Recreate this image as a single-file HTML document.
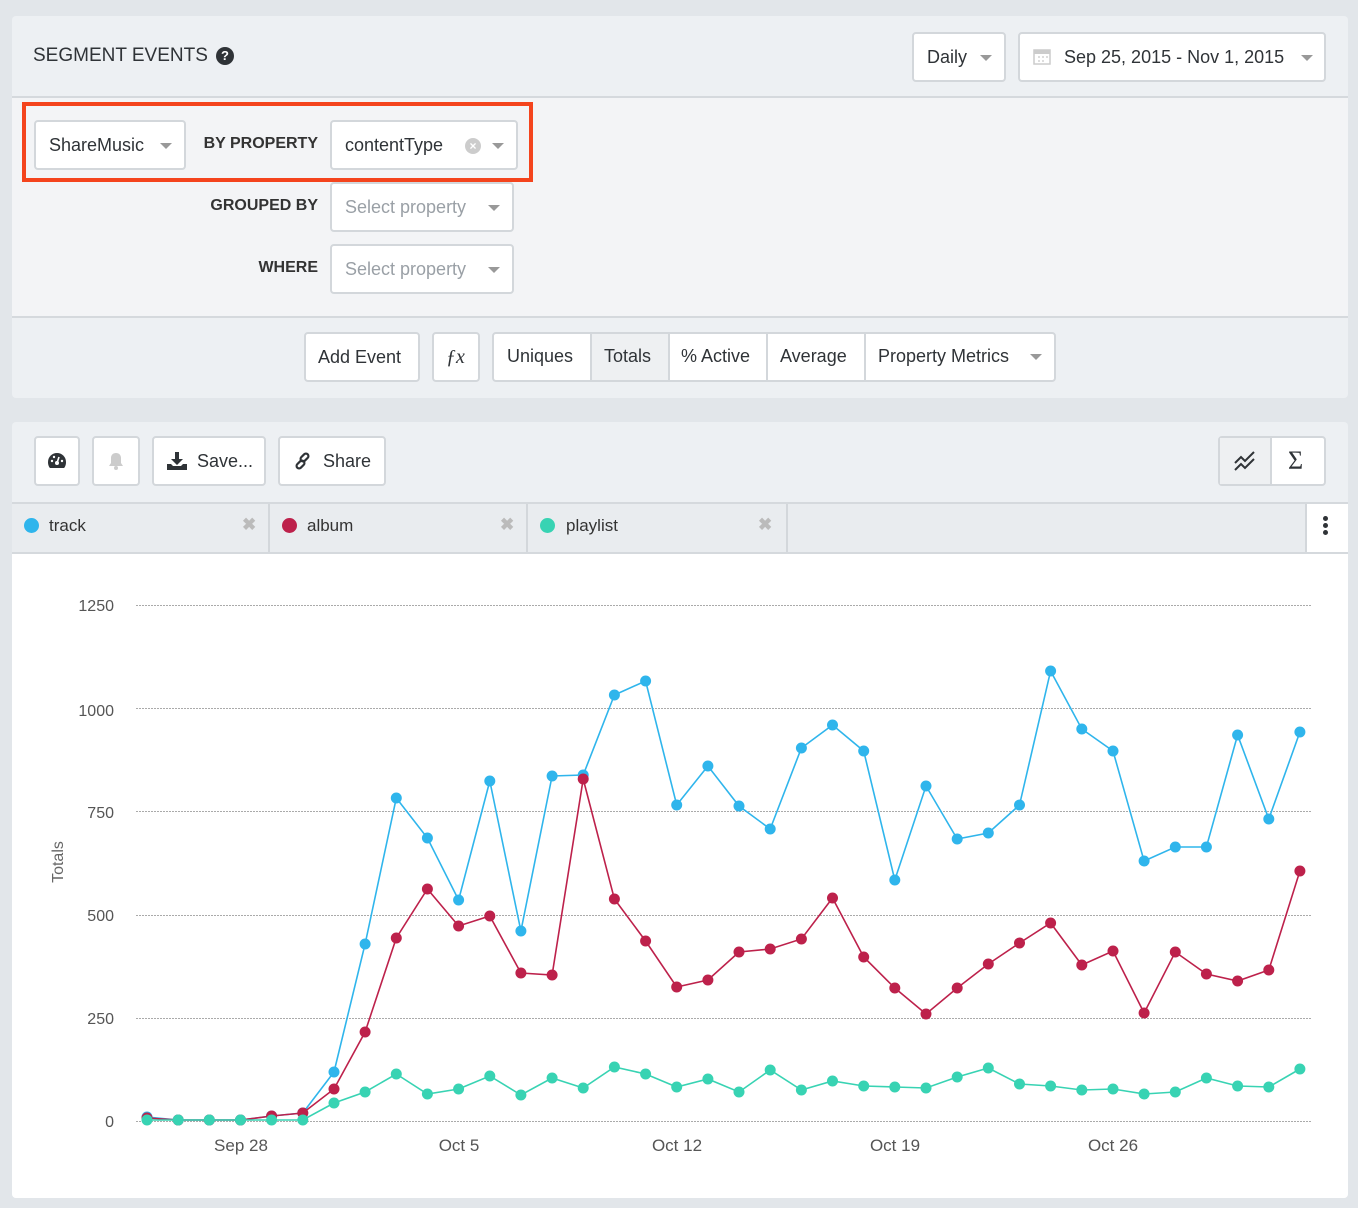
<!DOCTYPE html>
<html><head><meta charset="utf-8"><style>
*{box-sizing:border-box;margin:0;padding:0}
body{width:1358px;height:1208px;background:#e2e6ea;font-family:"Liberation Sans",sans-serif;color:#333;position:relative;overflow:hidden}
.a{position:absolute}
.panel{position:absolute;left:12px;width:1336px;background:#edf0f3;border-radius:4px}
.btn{position:absolute;background:#fff;border:2px solid #d3d7db;border-radius:4px;font-size:18px;color:#2f3337;display:flex;align-items:center;padding-left:13px;white-space:nowrap}
.car{display:inline-block;width:0;height:0;border-left:6px solid transparent;border-right:6px solid transparent;border-top:6px solid #999;position:absolute}
.lbl{position:absolute;font-size:16px;font-weight:bold;color:#333;text-align:right}
.ph{color:#9aa0a6}
</style></head><body>
<div class="panel" style="top:16px;height:382px;">
 <div class="a" style="left:0;top:80px;width:1336px;height:2px;background:#d5d9dd"></div>
 <div class="a" style="left:0;top:82px;width:1336px;height:218px;background:#f3f4f6"></div>
 <div class="a" style="left:0;top:300px;width:1336px;height:2px;background:#d5d9dd"></div>
</div>
<div class="a" style="left:33px;top:45px;font-size:19px;color:#2f3337">SEGMENT EVENTS</div>
<div class="a" style="left:216px;top:47px;width:18px;height:18px;border-radius:50%;background:#2f3337;color:#fff;font-size:13px;font-weight:bold;text-align:center;line-height:18px">?</div>
<div class="btn" style="left:912px;top:32px;width:94px;height:50px">Daily<span class="car" style="left:66px;top:21px"></span></div>
<div class="btn" style="left:1018px;top:32px;width:308px;height:50px;padding-left:44px">
 <svg class="a" style="left:13px;top:13px" width="18" height="18"><rect x="1" y="3" width="16" height="14" fill="none" stroke="#ccc" stroke-width="1.5"/><rect x="1" y="3" width="16" height="4" fill="#ccc"/><path d="M5 9h2v2H5zM9 9h2v2H9zM13 9h2v2h-2zM5 13h2v2H5zM9 13h2v2H9z" fill="#ddd"/></svg>
 Sep 25, 2015 - Nov 1, 2015<span class="car" style="left:281px;top:21px"></span></div>

<div class="a" style="left:22px;top:102px;width:511px;height:80px;border:4px solid #f4441d"></div>
<div class="btn" style="left:34px;top:120px;width:152px;height:50px">ShareMusic<span class="car" style="left:124px;top:21px"></span></div>
<div class="lbl" style="left:190px;top:135px;width:128px">BY PROPERTY</div>
<div class="btn" style="left:330px;top:120px;width:188px;height:50px">contentType
 <span class="a" style="left:133px;top:16px;width:16px;height:16px;border-radius:50%;background:#ccc;color:#fff;font-size:12px;line-height:16px;text-align:center;font-weight:bold">×</span>
 <span class="car" style="left:160px;top:21px"></span></div>
<div class="lbl" style="left:190px;top:197px;width:128px">GROUPED BY</div>
<div class="btn ph" style="left:330px;top:182px;width:184px;height:50px;color:#9aa0a6">Select property<span class="car" style="left:156px;top:21px"></span></div>
<div class="lbl" style="left:190px;top:259px;width:128px">WHERE</div>
<div class="btn ph" style="left:330px;top:244px;width:184px;height:50px;color:#9aa0a6">Select property<span class="car" style="left:156px;top:21px"></span></div>

<div class="btn" style="left:304px;top:332px;width:116px;height:50px;padding-left:12px">Add Event</div>
<div class="btn" style="left:432px;top:332px;width:48px;height:50px;padding-left:12px;font-family:'Liberation Serif',serif;font-style:italic;font-size:20px">ƒx</div>
<div class="a" style="left:492px;top:332px;width:564px;height:50px;border:2px solid #d3d7db;border-radius:4px;background:#fff"></div>
<div class="a" style="left:592px;top:334px;width:76px;height:46px;background:#eef0f2"></div>
<div class="a" style="left:590px;top:334px;width:2px;height:46px;background:#d3d7db"></div>
<div class="a" style="left:668px;top:334px;width:2px;height:46px;background:#d3d7db"></div>
<div class="a" style="left:766px;top:334px;width:2px;height:46px;background:#d3d7db"></div>
<div class="a" style="left:864px;top:334px;width:2px;height:46px;background:#d3d7db"></div>
<div class="a" style="left:507px;top:346px;font-size:18px;color:#2f3337">Uniques</div>
<div class="a" style="left:604px;top:346px;font-size:18px;color:#2f3337">Totals</div>
<div class="a" style="left:681px;top:346px;font-size:18px;color:#2f3337">% Active</div>
<div class="a" style="left:780px;top:346px;font-size:18px;color:#2f3337">Average</div>
<div class="a" style="left:878px;top:346px;font-size:18px;color:#2f3337">Property Metrics</div>
<span class="car" style="left:1030px;top:354px"></span>

<div class="panel" style="top:422px;height:776px;overflow:hidden">
 <div class="a" style="left:0;top:80px;width:1336px;height:2px;background:#d5d9dd"></div>
 <div class="a" style="left:0;top:82px;width:1336px;height:48px;background:#e9ecef"></div>
 <div class="a" style="left:0;top:130px;width:1336px;height:2px;background:#d5d9dd"></div>
 <div class="a" style="left:0;top:132px;width:1336px;height:644px;background:#fff"></div>
 <div class="a" style="left:256px;top:82px;width:2px;height:48px;background:#d3d7db"></div>
 <div class="a" style="left:514px;top:82px;width:2px;height:48px;background:#d3d7db"></div>
 <div class="a" style="left:774px;top:82px;width:2px;height:48px;background:#d3d7db"></div>
 <div class="a" style="left:1293px;top:82px;width:2px;height:48px;background:#d3d7db"></div>
 <div class="a" style="left:1295px;top:82px;width:41px;height:48px;background:#fff"></div>
</div>
<div class="btn" style="left:34px;top:436px;width:46px;height:50px;padding:0;justify-content:center">
 <svg width="20" height="18" viewBox="0 0 20 18"><path d="M10 1a9 9 0 0 0-9 9c0 3 1 5 2 6h14c1-1 2-3 2-6a9 9 0 0 0-9-9z" fill="#2f3337"/><circle cx="10" cy="11" r="2" fill="#fff"/><path d="M10 11L12 5" stroke="#fff" stroke-width="1.6"/><circle cx="5" cy="9" r="1.2" fill="#fff"/><circle cx="7" cy="5" r="1.2" fill="#fff"/><circle cx="15" cy="9" r="1.2" fill="#fff"/></svg></div>
<div class="btn" style="left:92px;top:436px;width:48px;height:50px;padding:0;justify-content:center">
 <svg width="18" height="20" viewBox="0 0 18 20"><path d="M9 2c-3 0-5 2-5 5v5l-2 3h14l-2-3V7c0-3-2-5-5-5z" fill="#ccc"/><circle cx="9" cy="17" r="2" fill="#ccc"/></svg></div>
<div class="btn" style="left:152px;top:436px;width:114px;height:50px">
 <svg width="20" height="18" viewBox="0 0 20 18" style="margin-right:10px"><path d="M8 0h4v7h4l-6 6-6-6h4z" fill="#2f3337"/><path d="M0 12h4l2 2h8l2-2h4v6H0z" fill="#2f3337"/></svg>Save...</div>
<div class="btn" style="left:278px;top:436px;width:108px;height:50px">
 <svg width="20" height="20" viewBox="0 0 20 20" style="margin-right:10px"><g fill="none" stroke="#2f3337" stroke-width="2.2"><rect x="9" y="2" width="5" height="9" rx="2.5" transform="rotate(45 11.5 6.5)"/><rect x="5" y="9" width="5" height="9" rx="2.5" transform="rotate(45 7.5 13.5)"/></g></svg>Share</div>
<div class="a" style="left:1218px;top:436px;width:108px;height:50px;border:2px solid #d3d7db;border-radius:4px;background:#fff"></div>
<div class="a" style="left:1220px;top:438px;width:50px;height:46px;background:#eef0f2"></div>
<div class="a" style="left:1270px;top:438px;width:2px;height:46px;background:#d3d7db"></div>
<svg class="a" style="left:1233px;top:450px" width="24" height="22" viewBox="0 0 24 22"><path d="M2 13l6-6 4 4 9-9M2 20l6-6 4 4 9-9" fill="none" stroke="#2f3337" stroke-width="2"/></svg>
<div class="a" style="left:1288px;top:446px;font-size:26px;color:#2f3337;font-family:'Liberation Serif',serif">Σ</div>

<div class="a" style="left:24px;top:518px;width:15px;height:15px;border-radius:50%;background:#2fb5ec"></div>
<div class="a" style="left:49px;top:516px;font-size:17px">track</div>
<div class="a" style="left:242px;top:515px;font-size:17px;color:#bbb;font-weight:bold">✖</div>
<div class="a" style="left:282px;top:518px;width:15px;height:15px;border-radius:50%;background:#bd214b"></div>
<div class="a" style="left:307px;top:516px;font-size:17px">album</div>
<div class="a" style="left:500px;top:515px;font-size:17px;color:#bbb;font-weight:bold">✖</div>
<div class="a" style="left:540px;top:518px;width:15px;height:15px;border-radius:50%;background:#38d3b3"></div>
<div class="a" style="left:566px;top:516px;font-size:17px">playlist</div>
<div class="a" style="left:758px;top:515px;font-size:17px;color:#bbb;font-weight:bold">✖</div>
<div class="a" style="left:1323px;top:516px;width:5px;height:5px;border-radius:50%;background:#2f3337;box-shadow:0 7px 0 #2f3337,0 14px 0 #2f3337"></div>

<svg class="a" style="left:0;top:0" width="1358" height="1208" id="ch">
<g stroke="#aaa" stroke-width="1" stroke-dasharray="2,1">
<line x1="136" x2="1311" y1="605.5" y2="605.5"/><line x1="136" x2="1311" y1="708.5" y2="708.5"/><line x1="136" x2="1311" y1="811.5" y2="811.5"/><line x1="136" x2="1311" y1="915.5" y2="915.5"/><line x1="136" x2="1311" y1="1018.5" y2="1018.5"/><line x1="136" x2="1311" y1="1121.5" y2="1121.5"/>
</g>
<g font-family="Liberation Sans,sans-serif" font-size="16" fill="#555" text-anchor="end">
<text x="114" y="611">1250</text><text x="114" y="716">1000</text><text x="114" y="818">750</text><text x="114" y="921">500</text><text x="114" y="1024">250</text><text x="114" y="1127">0</text>
</g>
<g font-family="Liberation Sans,sans-serif" font-size="17" fill="#555" text-anchor="middle">
<text x="241" y="1151">Sep 28</text><text x="459" y="1151">Oct 5</text><text x="677" y="1151">Oct 12</text><text x="895" y="1151">Oct 19</text><text x="1113" y="1151">Oct 26</text>
</g>
<text x="63" y="862" transform="rotate(-90 63 862)" font-family="Liberation Sans,sans-serif" font-size="16" fill="#666" text-anchor="middle">Totals</text>
</svg>
<script>
var T=[1117,1120,1120,1120,1116,1113,1072,944,798,838,900,781,931,776,775,695,681,805,766,806,829,748,725,751,880,786,839,833,805,671,729,751,861,847,847,735,819,732];
var A=[1118,1120,1120,1120,1116,1113,1089,1032,938,889,926,916,973,975,779,899,941,987,980,952,949,939,898,957,988,1014,988,964,943,923,965,951,1013,952,974,981,970,871];
var P=[1120,1120,1120,1120,1120,1120,1103,1092,1074,1094,1089,1076,1095,1078,1088,1067,1074,1087,1079,1092,1070,1090,1081,1086,1087,1088,1077,1068,1084,1086,1090,1089,1094,1092,1078,1086,1087,1069];
var s=document.getElementById('ch'),h='';
function ser(d,c){var p=d.map(function(y,i){return (147+i*31.16).toFixed(1)+','+y}).join(' ');
h+='<polyline points="'+p+'" fill="none" stroke="'+c+'" stroke-width="1.6"/>';
d.forEach(function(y,i){h+='<circle cx="'+(147+i*31.16).toFixed(1)+'" cy="'+y+'" r="5.5" fill="'+c+'"/>'});}
ser(T,'#2fb5ec');ser(A,'#bd214b');ser(P,'#38d3b3');
s.insertAdjacentHTML('beforeend',h);
</script>
</body></html>
